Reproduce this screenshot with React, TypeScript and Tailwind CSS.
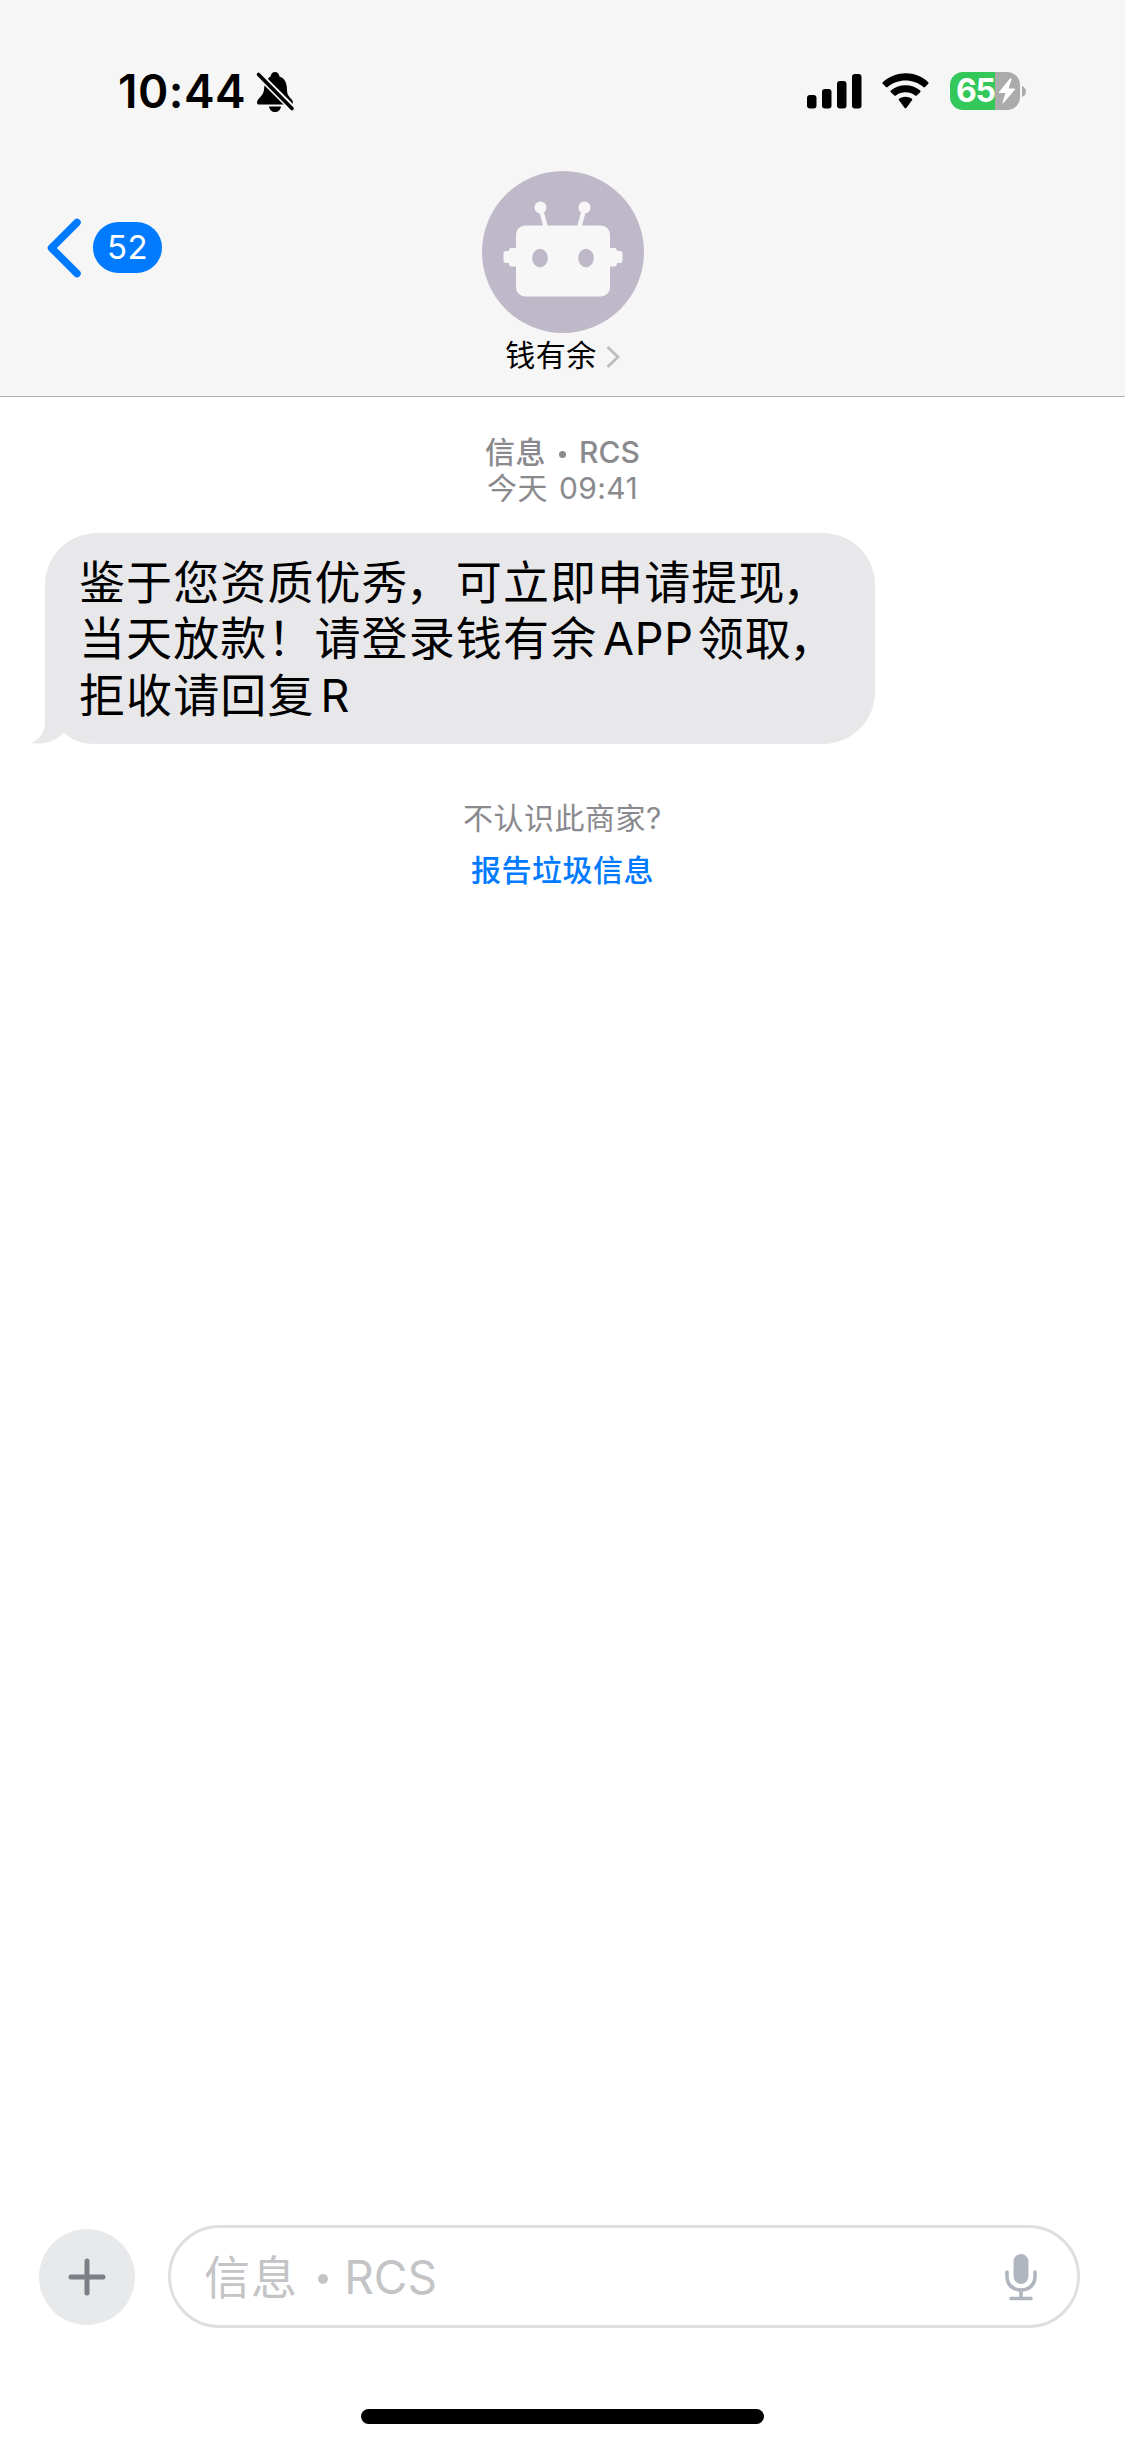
import React from "react";

function StatusBar() {
  return (
    <div className="flex h-[110px] items-start justify-between pl-[118px] pr-[99px] pt-[66px] text-black">
      <div className="flex">
        <span className="w-[137px] whitespace-nowrap text-[46px] font-semibold leading-[50px] tracking-[0.5px]">10:44</span>
        <svg className="mt-[5px]" width="40" height="42" viewBox="0 0 40 42">
          <path d="M12 10C10 12 9 15 9 19C8 26 2 27 2 32Q2 33.500 4 33.500H36Q38 33.500 38 32C38 27 32 27 32 19C32 11 29 7 24.500 5.500C24 3 22.500 1 20 1C17.500 1 16 3 15.500 5.500C14 6.200 13 7.500 12 10Z" />
          <path d="M14 35.500H26C25.500 39 23 41 20 41S14.500 39 14 35.500Z" />
          <path d="M1 6L35 40L40 35L6 1Z" fill="#f6f6f6" />
          <path d="M3.500 3.500L37 37.500" stroke="black" strokeWidth="3.600" strokeLinecap="round" />
        </svg>
      </div>
      <div className="flex pt-[6px]">
        <svg width="56" height="38" viewBox="0 0 56 38">
          <rect x="0" y="23" width="9.500" height="13.500" rx="3" />
          <rect x="15" y="17" width="9.500" height="19.500" rx="3" />
          <rect x="30" y="9" width="9.500" height="27.500" rx="3" />
          <rect x="45" y="2" width="9.500" height="34.500" rx="3" />
        </svg>
        <svg className="ml-[19px]" width="48" height="38" viewBox="0 0 48 38">
          <path d="M.7 11.800Q0 11 .8 10.200C14-1.700 34-1.700 46.200 10.200Q47 11 46.300 11.800L43 15.100Q42.200 15.800 41.400 15.100C31.500 6.300 15.500 6.300 5.600 15.100Q4.800 15.800 4 15.100Z" />
          <path d="M8.800 20.200Q8 19.400 8.800 18.600C17.200 11.600 29.800 11.600 38.200 18.600Q39 19.400 38.200 20.200L34.700 23.500Q34 24.200 33.100 23.500C27.700 19.100 19.300 19.100 13.900 23.500Q13 24.200 12.300 23.500Z" />
          <path d="M17 28.300Q16.200 27.500 17.100 26.800C20.800 24.100 26.200 24.100 29.900 26.800Q30.800 27.500 30 28.300L24.300 35.900Q23.500 36.700 22.700 35.900Z" />
        </svg>
        <div className="ml-[20px] flex h-[38px] w-[70px] items-center overflow-hidden rounded-[13px] bg-linear-to-r from-[#34c759] from-65% to-[#ababab] to-65% pl-[6px]">
          <span className="w-[42px] text-[32px] font-bold leading-[38px] tracking-[-1.200px] text-white">65</span>
          <svg width="18" height="26" viewBox="0 0 18 26" fill="white">
            <path d="M12 .5L1 14Q.3 15 1.500 15H7.500L4.500 24.500Q4.300 26 5.500 25L17 11.500Q17.700 10.500 16.500 10.500H10.500L13.500 1.500Q13.500-.7 12 .5Z" />
          </svg>
        </div>
        <svg className="ml-[2px] mt-[14px]" width="4" height="11" viewBox="0 0 4 11"><path d="M0 0Q4 1.500 4 5.500T0 11Z" fill="#ababab" /></svg>
      </div>
    </div>
  );
}

function Avatar() {
  return (
    <svg width="162" height="162" viewBox="0 0 162 162">
      <circle cx="81" cy="81" r="81" fill="#bfb8c8" />
      <g fill="#f7f7f7">
        <rect x="34" y="54.500" width="94" height="71" rx="9" />
        <path d="M34 77H29Q27 77 27 80H24Q21.500 80 21.500 83V89Q21.500 92 24 92H27Q27 95.500 29 95.500H34ZM128 77H132.500Q135 77 135 80H138Q140.500 80 140.500 83V89Q140.500 92 138 92H135Q135 95.500 132.500 95.500H128Z" />
        <circle cx="58.500" cy="36.500" r="6" />
        <circle cx="102.500" cy="36.500" r="6" />
      </g>
      <path d="M58.500 37L64 57M102.500 37L97 57" stroke="#f7f7f7" strokeWidth="4.500" />
      <ellipse cx="58" cy="87" rx="7.800" ry="9.200" fill="#bfb8c8" />
      <ellipse cx="104" cy="87" rx="7.800" ry="9.200" fill="#bfb8c8" />
    </svg>
  );
}

function Header() {
  return (
    <header className="h-[397px] border-b border-[#b2b2b2] bg-[#f6f6f6]">
      <StatusBar />
      <div className="grid grid-cols-[1fr_auto_1fr] pt-[61px]">
        <div className="flex items-start pl-[46px] pt-[47px]">
          <svg width="37" height="60" viewBox="0 0 37 60" fill="none" stroke="#007aff" strokeWidth="7.500" strokeLinecap="round" strokeLinejoin="round">
            <path d="M31 4.500L5.500 30L31 55.500" />
          </svg>
          <div className="ml-[10px] mt-[4px] h-[51px] w-[69px] rounded-full bg-[#007aff] text-center text-[33px] leading-[51px] tracking-[0.5px] text-white">52</div>
        </div>
        <div className="flex flex-col items-center">
          <Avatar />
          <div className="mt-px flex h-[42px] items-center">
            <span className="text-[30px] leading-[42px] tracking-[0.500px] text-black">钱有余</span>
            <svg className="ml-[9px] mt-[4px]" width="14" height="24" viewBox="0 0 14 24" fill="none" stroke="#bdbdbf" strokeWidth="2.800"><path d="M1.500 2L12 12L1.500 22" /></svg>
          </div>
        </div>
        <div />
      </div>
    </header>
  );
}

function MessageBubble() {
  return (
    <div className="relative ml-[45px] mt-[25px] h-[211px] w-[830px] rounded-[52px] bg-[#e8e8ea] pl-[34px] pt-[21px] text-[46px] leading-[56px] tracking-[1.100px] text-black">
      <svg className="absolute bottom-0 left-[-14px]" width="64" height="64" viewBox="0 0 64 64">
        <path d="M14 0V42C14 53 7 61 0 63C12 65 24 62 33 53C43 62 52 64 64 64V0Z" fill="#e8e8ea" />
        <path d="M33 53C42 61 52 64 64 64H20C25 61 29 58 33 53Z" fill="white" />
      </svg>
      <p className="relative whitespace-nowrap">鉴于您资质优秀<span className="relative left-[-3px]">，</span>可立即申请提现<span className="relative left-[-3px]">，</span></p>
      <p className="relative whitespace-nowrap">当天放款！请登录钱有余<span className="ml-[6px] mr-[4px] text-[45px] tracking-[0.700px]">APP</span>领取<span className="relative left-[-3px]">，</span></p>
      <p className="relative whitespace-nowrap">拒收请回复<span className="ml-[6px] text-[45px]">R</span></p>
    </div>
  );
}

function Composer() {
  return (
    <div className="flex items-center pl-[39px] pr-[45px]">
      <button className="flex size-[96px] items-center justify-center rounded-full bg-[#e8e9eb]">
        <svg width="38" height="38" viewBox="0 0 38 38" stroke="#7d7e86" strokeWidth="5" strokeLinecap="round"><path d="M19 3V35M3 19H35" /></svg>
      </button>
      <div className="ml-[33px] flex h-[103px] flex-1 items-center justify-between rounded-full border-3 border-[#dfdfe1] pl-[33px] pr-[39px]">
        <div className="flex items-center text-[46px] leading-[56px] text-[#c4c4c7]">
          <span className="tracking-[1.100px]">信息</span>
          <span className="ml-[20px] mr-[16px] mt-[5px] size-[10px] rounded-full bg-[#c4c4c7]" />
          <span>RCS</span>
        </div>
        <svg width="34" height="48" viewBox="0 0 34 48" fill="none" stroke="#b0b5bf" strokeWidth="3.600" strokeLinecap="round">
          <rect x="9.500" y="1" width="15" height="30" rx="7.500" fill="#b0b5bf" stroke="none" />
          <path d="M3 19V23C3 32 9 37 17 37S31 32 31 23V19M17 37V45M7 45.500H27" />
        </svg>
      </div>
    </div>
  );
}

export default function App() {
  return (
    <div className="flex h-[2446px] w-[1125px] flex-col bg-white font-[Inter,'Noto_Sans_CJK_SC',sans-serif]">
      <Header />
      <main className="flex flex-1 flex-col">
        <div className="mt-[37px] flex flex-col items-center text-[30px] leading-[37px] text-[#8a8a8e]">
          <div className="flex items-center font-medium">
            <span className="tracking-[0.500px]">信息</span>
            <span className="ml-[13px] mr-[13px] mt-[3px] size-[7px] rounded-full bg-[#8a8a8e]" />
            <span>RCS</span>
          </div>
          <div className="relative top-[-1px]"><span className="tracking-[0.500px]">今天</span><span className="ml-[11px] tracking-[0.400px]">09:41</span></div>
        </div>
        <MessageBubble />
        <div className="mt-[48px] flex flex-col items-center text-[30px] leading-[52px] tracking-[0.500px] text-[#8a8a8e]">
          <p>不认识此商家?</p>
          <a className="font-medium text-[#007aff]">报告垃圾信息</a>
        </div>
      </main>
      <Composer />
      <div className="flex h-[118px] justify-center pt-[81px]">
        <div className="h-[15px] w-[403px] rounded-full bg-black" />
      </div>
    </div>
  );
}
